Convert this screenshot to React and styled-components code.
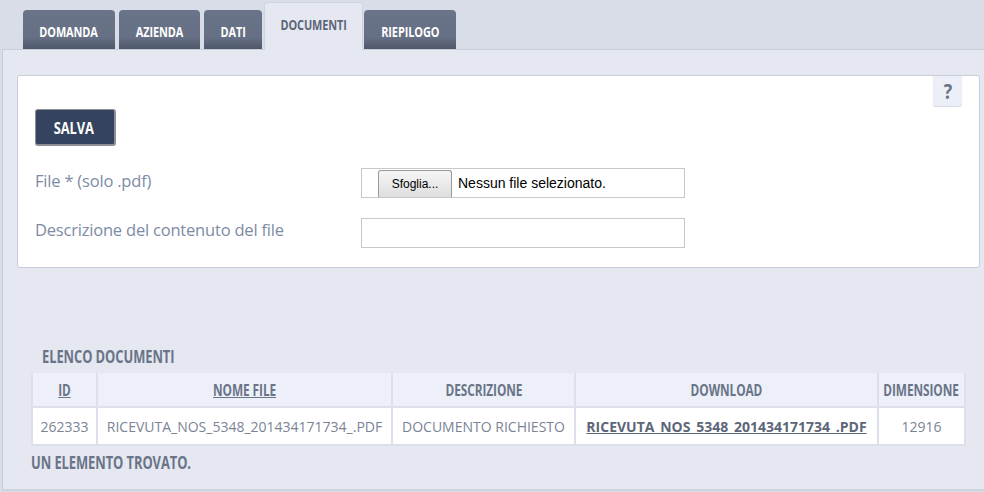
import React from "react";
import styled, { createGlobalStyle } from "styled-components";

const Global = createGlobalStyle`
  html, body { margin: 0; padding: 0; }
  body {
    background: #d9dde8;
    font-family: "Open Sans", "Noto Sans", sans-serif;
    width: 984px;
    height: 492px;
    overflow: hidden;
  }
`;

/* Open Sans Bold narrowed to imitate Open Sans Condensed Bold */
const Cond = styled.span`
  display: inline-block;
  font-family: "Open Sans", sans-serif;
  font-weight: 700;
  font-size: ${(p) => p.$size || 14}px;
  transform: scaleX(${(p) => p.$sx || 0.76});
  transform-origin: ${(p) => (p.$left ? "left center" : "center center")};
  margin: ${(p) => (p.$left ? "0" : "0 -40px")};
  white-space: nowrap;
  letter-spacing: -0.1px;
`;

const Page = styled.div`
  display: flex;
  flex-direction: column;
  height: 492px;
`;

const TabBar = styled.div`
  display: flex;
  align-items: flex-end;
  gap: 4px;
  padding: 0 0 0 23px;
  height: 49px;
  box-sizing: border-box;
`;

const Tab = styled.div`
  height: ${(p) => (p.$active ? 48 : 39)}px;
  width: ${(p) => p.$w}px;
  box-sizing: border-box;
  border-radius: 4px 4px 0 0;
  display: flex;
  align-items: ${(p) => (p.$active ? "flex-start" : "center")};
  justify-content: center;
  padding-top: ${(p) => (p.$active ? "12px" : "4px")};
  margin-left: ${(p) => (p.$active ? "-2px" : "0")};
  margin-right: ${(p) => (p.$active ? "-3px" : "0")};
  color: ${(p) => (p.$active ? "#5d6679" : "#ffffff")};
  background: ${(p) =>
    p.$active
      ? "#e5e8f1"
      : "linear-gradient(to bottom, #6a7488 0%, #667084 70%, #4f576a 100%)"};
  border: ${(p) => (p.$active ? "1px solid #cfd3de" : "none")};
  border-bottom: none;
  position: relative;
  z-index: ${(p) => (p.$active ? 2 : 1)};
  margin-bottom: ${(p) => (p.$active ? "-1px" : "0")};
`;

const Panel = styled.div`
  margin-left: 2px;
  background: #e5e8f1;
  border-top: 1px solid #c9cdd9;
  border-left: 1px solid #c9cdd9;
  border-bottom: 2px solid #cfd3de;
  padding: 25px 4px 0 14px;
  display: flex;
  flex-direction: column;
  box-sizing: border-box;
  height: 442px;
`;

const Card = styled.div`
  background: #ffffff;
  border: 1px solid #c9cdd9;
  border-radius: 3px;
  height: 193px;
  box-sizing: border-box;
  position: relative;
  padding: 33px 0 0 17px;
  display: flex;
  flex-direction: column;
`;

const HelpButton = styled.div`
  position: absolute;
  top: 0;
  right: 17px;
  width: 29px;
  height: 30px;
  background: #eceff7;
  border-radius: 0 0 3px 3px;
  box-shadow: 0 1px 1px #d3d7e2;
  color: #6a7488;
  display: flex;
  align-items: center;
  justify-content: center;
`;

const SaveButton = styled.div`
  width: 81px;
  height: 37px;
  box-sizing: border-box;
  background: #34445e;
  border: 1px solid #8d8f94;
  border-right-width: 2px;
  border-bottom-width: 2px;
  border-radius: 3px;
  color: #fff;
  display: flex;
  align-items: center;
  justify-content: center;
  padding-right: 2px;
`;

const FormRow = styled.div`
  display: flex;
  align-items: flex-start;
  margin-top: ${(p) => p.$mt}px;
`;

const Label = styled.div`
  width: 326px;
  color: #7d8ba5;
  font-size: 16.5px;
  font-weight: 400;
  letter-spacing: -0.2px;
  padding-top: ${(p) => p.$pt || 0}px;
  flex-shrink: 0;
`;

const FileBox = styled.div`
  width: 324px;
  height: 30px;
  box-sizing: border-box;
  border: 1px solid #c8c8c8;
  display: flex;
  align-items: flex-end;
  padding-left: 16px;
  gap: 6px;
`;

const BrowseButton = styled.div`
  width: 74px;
  height: 27px;
  box-sizing: border-box;
  border: 1px solid #9a9a9a;
  border-bottom: none;
  border-radius: 3px 3px 0 0;
  background: linear-gradient(to bottom, #f6f6f6, #dedede);
  font-family: "Liberation Sans", Arial, sans-serif;
  font-size: 12px;
  color: #000;
  display: flex;
  align-items: center;
  justify-content: center;
`;

const FileText = styled.div`
  font-family: "Liberation Sans", Arial, sans-serif;
  font-size: 14px;
  color: #000;
  align-self: center;
`;

const TextInput = styled.div`
  width: 324px;
  height: 30px;
  box-sizing: border-box;
  border: 1px solid #c8c8c8;
`;

const ListTitle = styled.div`
  margin: 72px 0 0 25px;
  color: #6a7488;
  height: 33px;
  display: flex;
  align-items: center;
`;

const Table = styled.table`
  margin-left: 14px;
  border-collapse: collapse;
  width: 933px;
  table-layout: fixed;
`;

const Th = styled.th`
  background: #edf0f8;
  height: 33px;
  border: 2px solid #dde0ea;
  border-top: none;
  color: #6a7488;
  text-align: center;
  padding: 0;
  white-space: nowrap;
`;

const HeadText = styled(Cond)`
  text-decoration: ${(p) => (p.$link ? "underline" : "none")};
`;

const Td = styled.td`
  background: #fff;
  height: 36px;
  border: 2px solid #dde0ea;
  color: #7b8496;
  font-size: 14px;
  text-align: center;
  padding: 0;
  white-space: nowrap;
  overflow: hidden;
`;

const DownloadLink = styled.span`
  color: #5d6679;
  font-weight: bold;
  text-decoration: underline;
  font-size: 14px;
`;

const Found = styled.div`
  margin: 5px 0 0 14px;
  color: #6a7488;
`;

const tabs = [
  { label: "DOMANDA", w: 92 },
  { label: "AZIENDA", w: 81 },
  { label: "DATI", w: 58 },
  { label: "DOCUMENTI", w: 99, active: true },
  { label: "RIEPILOGO", w: 92 },
];

const headers = [
  { label: "ID", link: true },
  { label: "NOME FILE", link: true },
  { label: "DESCRIZIONE" },
  { label: "DOWNLOAD" },
  { label: "DIMENSIONE" },
];

export default function App() {
  return (
    <>
      <Global />
      <Page>
        <TabBar>
          {tabs.map((t) => (
            <Tab key={t.label} $w={t.w} $active={t.active}>
              <Cond $size={14} $sx={0.78}>{t.label}</Cond>
            </Tab>
          ))}
        </TabBar>
        <Panel>
          <Card>
            <HelpButton>
              <Cond $size={21} $sx={0.85}>?</Cond>
            </HelpButton>
            <SaveButton>
              <Cond $size={16.5} $sx={0.78}>SALVA</Cond>
            </SaveButton>
            <FormRow $mt={22}>
              <Label $pt={1}>File * (solo .pdf)</Label>
              <FileBox>
                <BrowseButton>Sfoglia...</BrowseButton>
                <FileText>Nessun file selezionato.</FileText>
              </FileBox>
            </FormRow>
            <FormRow $mt={20}>
              <Label $pt={0}>Descrizione del contenuto del file</Label>
              <TextInput />
            </FormRow>
          </Card>
          <ListTitle>
            <Cond $size={17} $sx={0.76} $left>ELENCO DOCUMENTI</Cond>
          </ListTitle>
          <Table>
            <colgroup>
              <col style={{ width: 65 }} />
              <col style={{ width: 295 }} />
              <col style={{ width: 183 }} />
              <col style={{ width: 303 }} />
              <col style={{ width: 87 }} />
            </colgroup>
            <thead>
              <tr>
                {headers.map((h) => (
                  <Th key={h.label}>
                    <HeadText $size={16} $sx={0.74} $link={h.link}>
                      {h.label}
                    </HeadText>
                  </Th>
                ))}
              </tr>
            </thead>
            <tbody>
              <tr>
                <Td>262333</Td>
                <Td>RICEVUTA_NOS_5348_201434171734_.PDF</Td>
                <Td>DOCUMENTO RICHIESTO</Td>
                <Td>
                  <DownloadLink>RICEVUTA_NOS_5348_201434171734_.PDF</DownloadLink>
                </Td>
                <Td>12916</Td>
              </tr>
            </tbody>
          </Table>
          <Found>
            <Cond $size={17} $sx={0.76} $left>UN ELEMENTO TROVATO.</Cond>
          </Found>
        </Panel>
      </Page>
    </>
  );
}
